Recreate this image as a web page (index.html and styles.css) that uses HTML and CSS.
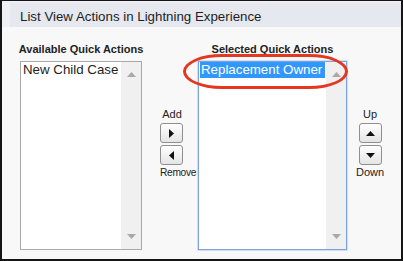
FILE: index.html
```html
<!DOCTYPE html>
<html>
<head>
<meta charset="utf-8">
<link rel="stylesheet" href="styles.css">
</head>
<body>
<div class="frame">
  <div class="top">
    <div class="band"><h3 class="title">List View Actions in Lightning Experience</h3></div>
  </div>
  <div class="content">
    <div class="col col-left">
      <div class="label">Available Quick Actions</div>
      <div class="listbox">
        <div class="options">
          <div class="opt">New Child Case</div>
        </div>
        <div class="scroll">
          <svg class="sarrow" width="9" height="5" viewBox="0 0 9 5"><polygon points="0,5 4.5,0 9,5" fill="#a8a8a8"/></svg>
          <svg class="sarrow" width="9" height="5" viewBox="0 0 9 5"><polygon points="0,0 9,0 4.5,5" fill="#a8a8a8"/></svg>
        </div>
      </div>
    </div>
    <div class="btns btns-add">
      <div class="blabel blabel-add">Add</div>
      <div class="btn"><svg width="5" height="9" viewBox="0 0 5 9"><polygon points="0,0 5,4.5 0,9" fill="#111"/></svg></div>
      <div class="btn"><svg width="5" height="9" viewBox="0 0 5 9"><polygon points="5,0 0,4.5 5,9" fill="#111"/></svg></div>
      <div class="blabel blabel-remove">Remove</div>
    </div>
    <div class="col col-right">
      <div class="label">Selected Quick Actions</div>
      <div class="listbox listbox-focus">
        <div class="options">
          <div class="opt opt-sel">Replacement Owner</div>
        </div>
        <div class="scroll">
          <svg class="sarrow" width="9" height="5" viewBox="0 0 9 5"><polygon points="0,5 4.5,0 9,5" fill="#a8a8a8"/></svg>
          <svg class="sarrow" width="9" height="5" viewBox="0 0 9 5"><polygon points="0,0 9,0 4.5,5" fill="#a8a8a8"/></svg>
        </div>
        <div class="oval"></div>
      </div>
    </div>
    <div class="btns btns-up">
      <div class="blabel">Up</div>
      <div class="btn"><svg width="9" height="5" viewBox="0 0 9 5"><polygon points="0,5 4.5,0 9,5" fill="#111"/></svg></div>
      <div class="btn"><svg width="9" height="5" viewBox="0 0 9 5"><polygon points="0,0 9,0 4.5,5" fill="#111"/></svg></div>
      <div class="blabel">Down</div>
    </div>
  </div>
</div>
</body>
</html>
```
FILE: styles.css
```css
html, body {
  margin: 0;
  padding: 0;
  background: #ffffff;
}
.frame {
  width: 403px;
  height: 261px;
  box-sizing: border-box;
  border: 2px solid #151515;
  border-top-width: 1px;
  background: #f8f8f8;
  font-family: "Liberation Sans", Arial, sans-serif;
  color: #222;
  display: flex;
  flex-direction: column;
}
.top {
  background: #eff0f3;
  padding-top: 1px;
  padding-left: 8px;
}
.band {
  height: 25px;
  box-sizing: border-box;
  background: #e5e8ef;
  border-top: 1px solid #eceef3;
  padding: 4px 0 0 10px;
}
.title {
  margin: 0;
  font-size: 13.3px;
  font-weight: normal;
  line-height: 19px;
  color: #1e1e1e;
}
.content {
  display: flex;
  align-items: flex-start;
  padding-top: 16px;
}
.col {
  display: flex;
  flex-direction: column;
  align-items: center;
}
.col-left {
  margin-left: 18px;
  width: 122px;
}
.col-right {
  margin-left: 6px;
  width: 149px;
}
.label {
  font-size: 11px;
  font-weight: bold;
  line-height: 13px;
  white-space: nowrap;
  color: #222;
  margin-bottom: 5px;
}
.listbox {
  position: relative;
  width: 100%;
  height: 189px;
  box-sizing: border-box;
  border: 1px solid #a9a9a9;
  background: #fff;
  display: flex;
}
.listbox-focus {
  border-color: #7ea3da;
  box-shadow: 0 0 0 0.5px #a9c3ea;
}
.options {
  flex: 1;
  padding: 0 1px;
  min-width: 0;
}
.opt {
  font-size: 13.3px;
  line-height: 16px;
  padding-left: 1px;
  white-space: nowrap;
  color: #1e1e1e;
}
.opt-sel {
  background: #3297fd;
  color: #fff;
}
.scroll {
  width: 20px;
  background: #f0f0f0;
  display: flex;
  flex-direction: column;
  justify-content: space-between;
  align-items: center;
  padding: 10px 0;
  box-sizing: border-box;
}
.sarrow {
  display: block;
}
.oval {
  position: absolute;
  left: -16px;
  top: -8px;
  width: 165px;
  height: 35px;
  box-sizing: border-box;
  border: 3px solid #e5371f;
  border-radius: 40px / 18px;
  pointer-events: none;
}
.btns {
  display: flex;
  flex-direction: column;
  margin-top: 65px;
}
.btns-add {
  margin-left: 18px;
  width: 32px;
  align-items: flex-start;
}
.btns-up {
  margin-left: 10px;
  width: 26px;
  align-items: center;
}
.blabel {
  font-size: 11px;
  line-height: 13px;
  color: #222;
  white-space: nowrap;
}
.blabel-add {
  width: 24px;
  text-align: center;
}
.blabel-remove {
  font-size: 10.2px;
  letter-spacing: -0.3px;
}
.btn {
  width: 23px;
  height: 20px;
  box-sizing: border-box;
  border: 1px solid #8f8f8f;
  border-radius: 3px;
  background: linear-gradient(#ffffff, #e4e4e4);
  display: flex;
  align-items: center;
  justify-content: center;
  margin-top: 2px;
}
.btn + .btn {
  margin-top: 2px;
}
.btn + .blabel {
  margin-top: 1px;
}
.btn svg {
  display: block;
}
```
